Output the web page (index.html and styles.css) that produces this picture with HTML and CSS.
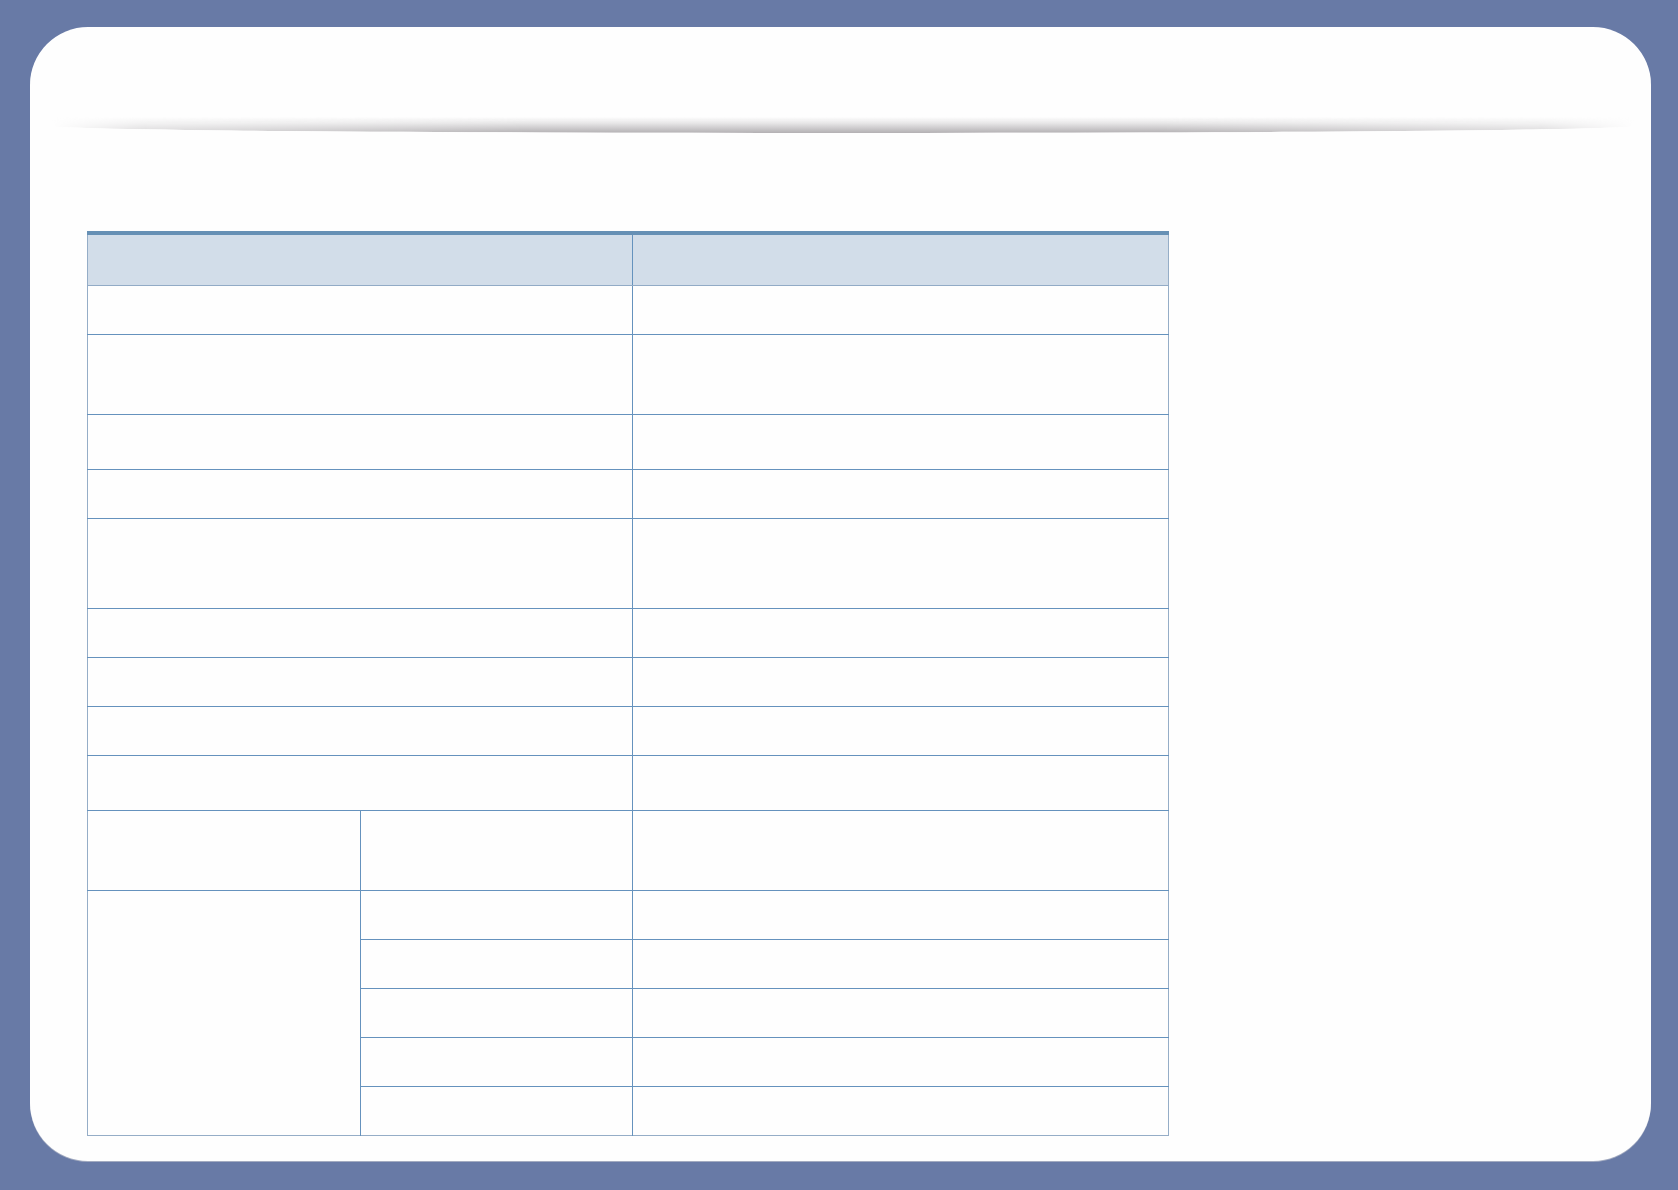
FILE: index.html
```html
<!DOCTYPE html>
<html lang="en">
<head>
    <meta charset="UTF-8">
    <meta name="viewport" content="width=device-width, initial-scale=1.0">
    <title>Blank Table Page</title>
    <link rel="stylesheet" href="styles.css">
</head>
<body>
    <div class="page">
        <div class="rule"></div>

        <table class="grid">
            <colgroup>
                <col class="col-a">
                <col class="col-b">
                <col class="col-c">
            </colgroup>
            <tr class="head">
                <th colspan="2"></th>
                <th></th>
            </tr>
            <tr><td colspan="2"></td><td></td></tr>
            <tr class="r80"><td colspan="2"></td><td></td></tr>
            <tr class="r55"><td colspan="2"></td><td></td></tr>
            <tr><td colspan="2"></td><td></td></tr>
            <tr class="r90"><td colspan="2"></td><td></td></tr>
            <tr><td colspan="2"></td><td></td></tr>
            <tr><td colspan="2"></td><td></td></tr>
            <tr><td colspan="2"></td><td></td></tr>
            <tr class="r55"><td colspan="2"></td><td></td></tr>
            <tr class="r80"><td></td><td></td><td></td></tr>
            <tr><td class="span" rowspan="5"></td><td></td><td></td></tr>
            <tr><td></td><td></td></tr>
            <tr><td></td><td></td></tr>
            <tr><td></td><td></td></tr>
            <tr class="last"><td></td><td></td></tr>
        </table>
    </div>
</body>
</html>
```

FILE: styles.css
```css
html, body {
    margin: 0;
    background: #687aa6;
}
body {
    font-family: "Liberation Sans", Arial, sans-serif;
    height: 1190px;
    overflow: hidden;
}
.page {
    margin: 27px 27px 0 30px;
    height: 1134px;
    background: #fefefe;
    border-radius: 58px;
    padding-top: 90px;
    box-sizing: border-box;
    box-shadow: 0 1px 0 #a3abc0;
}
.rule {
    margin: 0 17px 0 22px;
    height: 16px;
    background: linear-gradient(to bottom, rgba(255,255,255,0) 0%, #e6e5e6 40%, #b3b0b3 100%);
    border-radius: 0 0 50% 50% / 0 0 7px 7px;
    -webkit-mask-image: linear-gradient(to right, transparent 0%, rgba(0,0,0,.5) 6%, #000 30%, #000 70%, rgba(0,0,0,.5) 94%, transparent 100%);
    mask-image: linear-gradient(to right, transparent 0%, rgba(0,0,0,.5) 6%, #000 30%, #000 70%, rgba(0,0,0,.5) 94%, transparent 100%);
}
.grid {
    margin: 98px 0 0 57px;
    width: 1082px;
    border-collapse: collapse;
    border: 1px solid #95adc7;
    table-layout: fixed;
}
.col-a {
    width: 273px;
}
.col-b {
    width: 272px;
}
.grid th,
.grid td {
    padding: 0;
    border-right: 1px solid #6592bd;
    border-bottom: 1px solid #6592bd;
}
.grid th {
    background: #d2dde9;
    border-top: 4px solid #6690b5;
    border-bottom-color: #92abc6;
}
.grid th:last-child,
.grid td:last-child {
    border-right: none;
}
.grid tr {
    height: 49px;
}
.grid .head {
    height: 52px;
}
.grid .r55 {
    height: 55px;
}
.grid .r80 {
    height: 80px;
}
.grid .r90 {
    height: 90px;
}
.grid .span,
.grid .last td {
    border-bottom: none;
}
```
